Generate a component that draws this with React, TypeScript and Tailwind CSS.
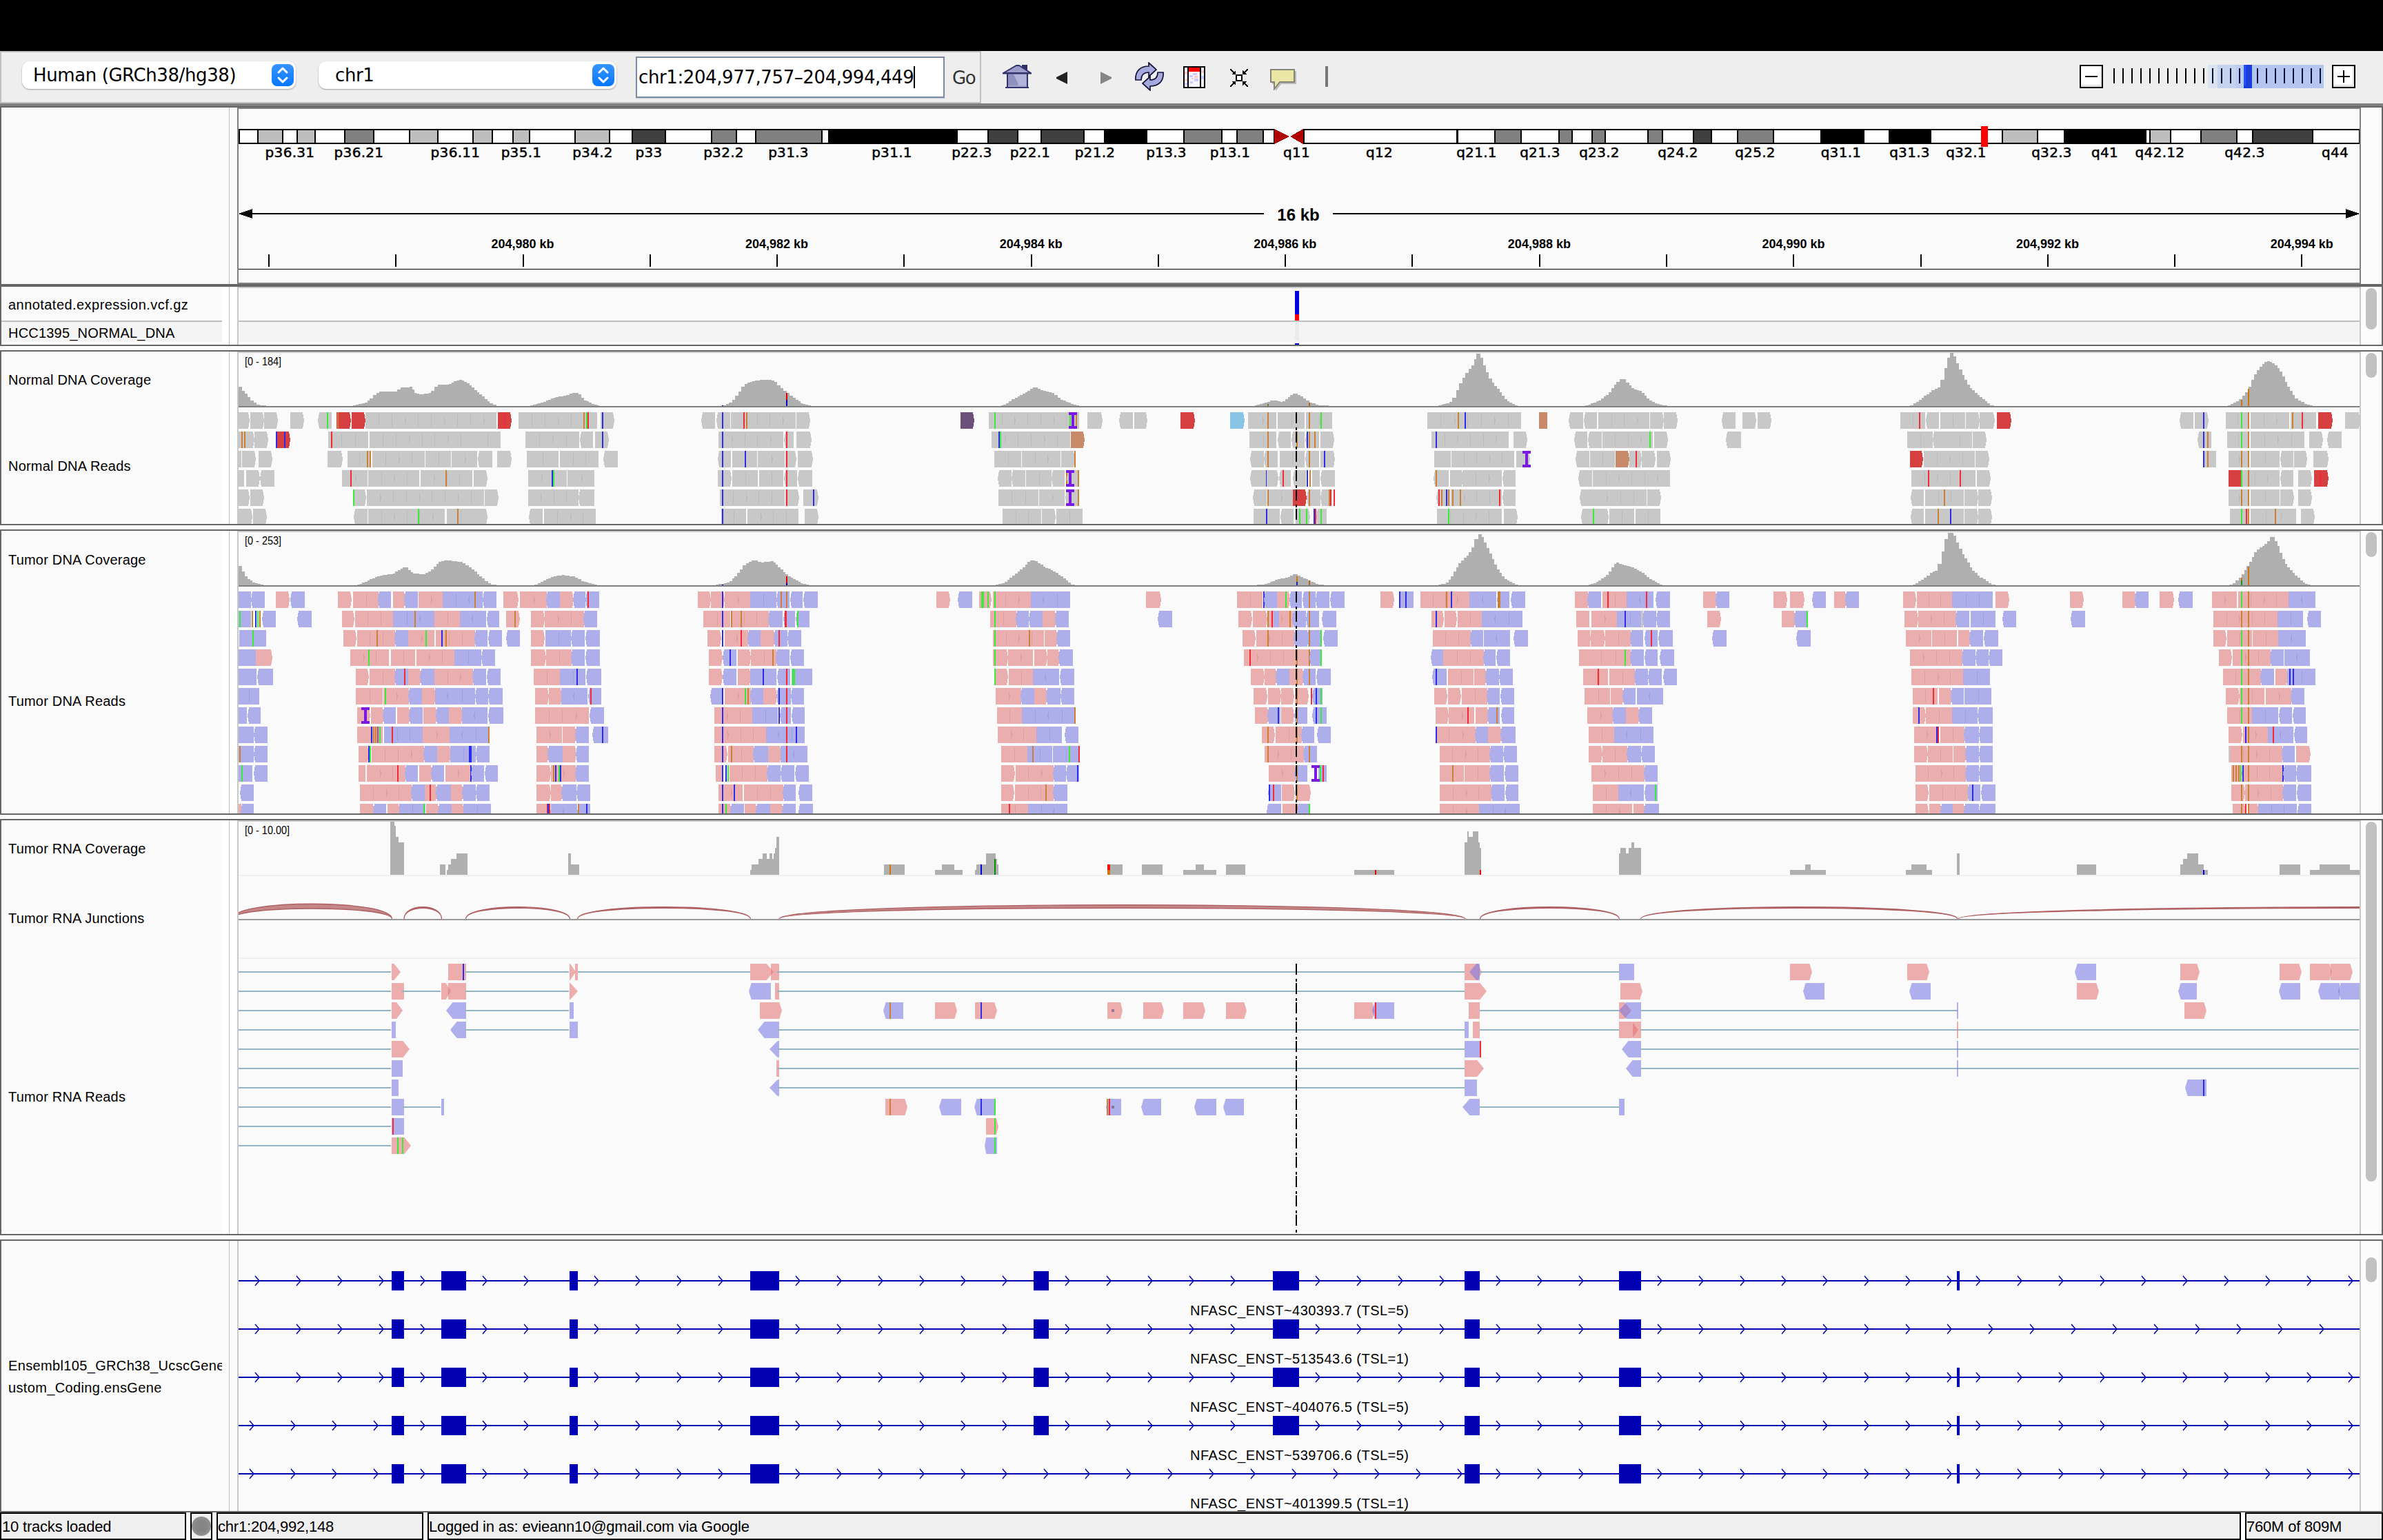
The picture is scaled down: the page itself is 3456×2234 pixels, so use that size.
import React from "react";

/* ------------------------------------------------------------------ */
/* Coordinates                                                          */
/* Track data is stored in three windows (A, B, C), each with its own   */
/* origin and bin density.                                              */
/* ------------------------------------------------------------------ */

type Win = "A" | "B" | "C";

const toX: Record<Win, (v: number) => number> = {
  A: (v) => v / 1.3517,
  B: (v) => 1150 + v / 1.3517,
  C: (v) => 2300 + v / 1.3564,
};

const WINDOWS: Win[] = ["A", "B", "C"];
const LEFT = 346;
const RIGHT = 3422;
const WIDTH = RIGHT - LEFT;

const FILL: Record<string, string> = {
  n: "#c8c8c8",
  p: "#ebaeae",
  b: "#aeaeeb",
  R: "#d64040",
  T: "#c98a6a",
  V: "#6b507c",
  L: "#87c4e5",
};

const SEAM: Record<string, string> = {
  n: "#bcbcbc",
  p: "#e39c9c",
  b: "#9e9ee2",
};

const MARK: Record<string, string> = {
  r: "#f52a35",
  g: "#3cea3c",
  u: "#2c2cec",
  o: "#cc8033",
  k: "#9a4f9a",
};

type Token = { kind: string; x0: number; x1: number | null; tip: number };

function parse(win: Win, text: string): Token[] {
  return text
    .split(" ")
    .filter(Boolean)
    .map((t) => {
      const m = /^([a-zA-Z])(-?[\d.]+)(?:-(\d+))?(?:>(\d+))?$/.exec(t);
      if (!m) return { kind: "?", x0: 0, x1: null, tip: 0 };
      return {
        kind: m[1],
        x0: toX[win](Number(m[2])),
        x1: m[3] ? toX[win](Number(m[3])) : null,
        tip: m[4] ? Number(m[4]) / 1.3517 : 0,
      };
    });
}

/* ------------------------------------------------------------------ */
/* DNA reads                                                            */
/* ------------------------------------------------------------------ */

type Row = [string, string, string];

const NORMAL_READS: Row[] = [
  [
    "n467-488 n491-516 n518-543 n569-595 n624-650 g642 R660-686 o663 R689-715 n716-973 R976-1002 r990 n1016-1170 o1145 g1150 r1153 n1177-1203 u1182 n1376-1402 n1406-1432 u1417 n1433-1560 r1458 o1464",
    "n7-32 V328-354 n384-561 g396 g544 o555 I549 n577-605 n641-667 n669-694 R760-787 L857-884 n892-948 o931 n950-1003 n1005-1057 o1012 g1036 n1244-1427 o1304 u1318 T1463-1479 n1522-1549",
    "n-3-22 n24-125 n126-152 n153-179 n269-295 n308-334 n338-364 n619-668 r657 n670-695 n697-746 n747-773 n775-803 R809-836 n1169-1195 n1198-1223 u1216 n1259-1305 g1290 o1303 n1307-1384 n1386-1437 o1390 r1409 R1441-1468 n1493-1522",
  ],
  [
    "n467-497 o474 o480 n499-524 R541-568 u542 u558 n643-722 r650 n724-928 n929-981 n1030-1136 n1138-1162 n1167-1192 u1182 n1408-1536 u1417 n1538-1556 r1542",
    "n7-35 n389-543 u404 g407 T545-570 n895-948 o931 n952-976 n978-1003 o988 n1005-1032 u1009 o1012 o1023 n1034-1060 n1252-1403 u1261 n1412-1438 n1533-1552",
    "n-4-3 n5-31 n33-132 g126 n134-160 n277-305 n632-682 n684-709 n710-760 n761-787 n1204-1230 u1216 o1224 n1261-1305 g1290 o1303 n1307-1413 n1423-1449 n1459-1486",
  ],
  [
    "n467-473 n474-500 n507-533 n642-670 n681-727 o720 o726 n730-832 n834-884 n886-935 n938-965 n974-1002 n1033-1095 n1097-1173 n1184-1211 n1408-1433 u1417 n1435-1484 u1461 n1486-1538 n1540-1560 r1542",
    "n9-38 n395-447 n449-524 n526-552 o553 n898-923 n925-950 o931 n954-1003 n1006-1032 o1012 n1034-1061 u1042 n1257-1289 n1291-1414 n1418-1444 I1438 n1536-1561",
    "n8-57 T58-84 n85-108 r99 n110-136 n140-165 R638-662 n664-765 n767-792 n1215-1240 u1216 o1224 n1264-1305 o1290 o1303 n1307-1365 n1367-1391 n1393-1418 n1431-1459",
  ],
  [
    "n467-479 n482-508 n511-538 n670-720 r688 n722-822 n825-926 o874 n928-954 n1035-1111 u1083 g1086 n1112-1165 n1407-1433 u1417 n1436-1486 n1488-1535 n1538-1563 r1542",
    "n11-38 n403-428 n430-455 n457-507 n508-533 o536 n538-560 I543 o559 n898-927 u928 n929-950 n954-976 r961 n981-1005 u1009 o1014 n1018-1033 n1036-1062 n1257-1286 o1261 n1288-1312 n1313-1390 n1392-1417 n1541-1567",
    "n13-165 n640-767 r674 r736 n769-795 R1264-1290 g1290 n1291-1365 o1303 n1367-1391 n1401-1427 R1433-1459 r1444",
  ],
  [
    "n467-488 n491-516 n693-717 g693 n719-949 n950-976 n1035-1134 n1135-1165 n1411-1538 u1417 n1540-1565 r1542",
    "n20-49 u40 n403-481 n483-533 n535-560 I543 o559 n903-929 o931 n933-980 R980-1006 n1008-1034 o1012 n1036-1054 o1051 r1055 r1061 n1263-1288 r1266 o1272 u1282 o1286 n1290-1390 o1293 o1309 r1385 n1392-1417 n1544-1570",
    "n15-119 n121-146 n640-665 n667-743 o706 n745-770 n772-798 n1264-1305 o1290 o1303 n1307-1365 n1366-1391 n1401-1427",
  ],
  [
    "n467-493 n496-522 n695-720 n722-872 g820 n876-928 o897 n929-954 n1038-1064 n1066-1168 n1414-1463 u1417 n1465-1565",
    "n23-49 n411-487 n488-514 n516-568 n903-954 u928 n957-982 n985-1012 g993 g1007 u1022 r1025 n1027-1046 g1036 n1263-1390 g1286 n1394-1419 n1546-1572",
    "n18-44 g15 n46-95 n97-146 n640-665 n667-743 o693 u717 n745-770 n772-798 n1267-1305 g1290 r1300 o1303 n1307-1397 o1357 n1406-1432",
  ],
];

const TUMOR_READS: Row[] = [
  [
    "b467-492 b494-519 p541-567 b571-597 p662-688 p692-742 b742-767 p770-794 b794-819 p820-868 b868-946 o931 b947-973 p987-1015 p1019-1072 b1072-1097 p1097-1123 b1124-1148 b1149-1175 r1153 p1368-1392 p1394-1419 u1417 p1420-1470 b1470-1522 b1524-1548 o1531 o1542 b1550-1573",
    "b21-49 p281-307 b325-351 p365-388 g370 g373 g382 p392-467 g396 b467-543 p692-721 p871-921 u923 b924-949 p949-973 g966 b974-998 b1000-1024 o1012 b1026-1052 b1054-1081 p1152-1178 b1190-1217 u1190 u1201 p1230-1326 o1282 u1291 b1326-1379 b1381-1405 o1383 o1385 b1408-1436 p1533-1560",
    "b4-30 p33-80 r44 b80-133 r120 b139-165 p231-256 b256-282 p369-395 p401-428 b446-472 p488-512 b512-537 p624-649 p651-720 b720-800 p806-832 p952-978 p1055-1081 b1081-1107 p1129-1155 b1167-1194 p1232-1281 p1283-1382 g1290 o1303 b1382-1435",
  ],
  [
    "b467-492 g471 o495 u501 g505 o509 b515-541 b584-611 p670-694 p696-770 b770-851 o814 p851-901 b901-953 b955-979 p992-1018 o1010 p1041-1066 p1068-1145 b1145-1171 p1379-1432 u1417 p1434-1507 o1434 o1453 b1507-1534 b1537-1558 r1539 r1541",
    "b7-32 g9 p387-438 g396 b438-462 b464-489 p489-515 b515-541 b717-743 p873-899 p901-928 o931 p933-980 r939 b942-953 o974 b980-1005 b1007-1032 o1012 b1038-1065 p1252-1275 u1261 p1277-1301 p1303-1350 b1350-1430 p1536-1560",
    "p-4-7 p11-61 b61-112 u77 n108-112 b113-138 b140-165 p239-265 p385-411 b411-437 g435 p627-652 p654-729 b729-754 b757-806 b820-846 b955-982 p1234-1360 o1290 o1303 b1360-1411 b1420-1446",
  ],
  [
    "b469-522 g496 p673-698 p700-775 o739 b775-800 p800-852 g836 p854-931 u866 o874 b931-956 b958-984 b993-1019 p1041-1067 b1069-1119 b1121-1146 b1149-1176 p1387-1413 u1417 p1420-1466 r1453 b1466-1491 p1491-1518 b1518-1543 r1528 b1545-1570",
    "p392-492 g396 o463 p494-518 b518-543 p881-906 p908-983 o931 b983-1008 b1009-1036 o1012 g1036 b1041-1068 p1254-1329 b1329-1353 b1355-1406 b1414-1441 p1538-1563",
    "p-2-8 p10-36 p38-88 b88-113 b116-141 r129 b144-171 b250-277 b415-442 p629-679 p681-730 p732-756 b756-781 b784-811 p1234-1259 p1261-1310 g1290 o1303 p1312-1362 b1362-1416",
  ],
  [
    "b467-502 p502-533 p687-763 g723 p766-814 p816-891 b891-943 b945-971 p1041-1069 p1071-1121 b1121-1146 b1149-1176 p1390-1415 b1418-1443 u1431 p1446-1470 p1472-1522 o1515 b1522-1548 b1550-1576",
    "p392-420 g396 p422-471 p473-497 p499-522 b522-549 p884-1012 r896 o988 o1013 b1014-1036 g1036 b1252-1275 p1275-1354 b1354-1378 b1380-1406 p1541-1568",
    "p0-88 g77 b88-114 b116-141 b147-174 p638-741 b741-766 b768-792 b794-819 p1245-1270 p1272-1347 g1290 o1303 b1347-1372 b1374-1424",
  ],
  [
    "b467-503 b506-535 p697-722 p724-775 b775-800 r793 p800-825 b825-851 p851-927 b927-953 b956-981 p1046-1097 b1097-1148 u1131 b1150-1179 p1390-1415 b1418-1444 p1446-1471 b1471-1522 u1496 b1525-1549 r1542 b1552-1566 g1555 g1557",
    "b11-38 p396-421 g396 p423-471 b471-522 b524-552 p898-923 o931 p925-947 b947-973 p973-1000 o988 b1000-1024 o1012 b1027-1054 b1255-1281 u1261 p1284-1334 p1336-1358 b1358-1384 b1386-1411 p1549-1570",
    "p0-44 r25 p46-96 b96-122 b124-149 b153-179 p640-742 b742-795 p1253-1328 g1290 o1303 b1328-1354 p1356-1380 b1380-1435 u1385 u1392",
  ],
  [
    "b467-508 p697-750 p752-802 g755 b802-827 p827-853 b853-931 b933-957 b959-985 p1049-1074 p1076-1100 b1100-1152 b1154-1179 r1158 b1393-1418 u1417 p1420-1472 g1461 o1466 b1472-1497 p1497-1522 b1524-1550 u1528 r1542 b1552-1576",
    "p397-447 b447-473 p473-498 b498-524 b526-552 p903-929 p931-955 p957-982 p984-1010 o988 r1017 b1019-1038 u1026 g1036 p1257-1282 p1284-1309 p1311-1361 b1361-1386 b1388-1414 p1552-1570",
    "p0-47 p49-73 b73-98 b100-152 p643-692 r684 p694-719 b719-743 b745-798 p1259-1284 p1286-1335 g1290 o1303 p1337-1388 b1388-1413",
  ],
  [
    "b467-484 b486-511 p700-725 I716 p727-751 b751-776 p779-803 b803-828 p830-855 b855-880 p880-906 b906-956 b958-987 p1049-1154 b1157-1184 p1400-1475 u1417 b1475-1525 u1528 b1530-1551 r1542 b1553-1578",
    "p400-449 b449-553 o553 p906-931 b931-956 u952 p957-982 b984-1008 o988 b1019-1046 u1026 g1036 p1260-1284 p1286-1336 r1323 p1338-1362 b1362-1386 o1380 b1389-1414 p1557-1570",
    "p3-53 b53-79 p79-104 b104-130 p643-667 u655 p669-720 b720-770 b772-800 p1261-1310 g1290 o1303 b1310-1362 b1365-1389 b1391-1416",
  ],
  [
    "b467-497 b499-524 p700-750 u728 o733 o737 k741 g745 b753-829 r769 p829-881 b881-959 o958 p1052-1101 p1103-1129 b1129-1154 b1163-1192 u1182 p1400-1502 u1417 b1502-1578 r1542 u1561",
    "p402-477 b477-527 b534-560 p919-944 o931 p946-997 b997-1022 o988 b1028-1054 p1260-1338 u1261 b1338-1363 p1363-1388 b1388-1417 p1560-1570",
    "p5-56 b56-133 p646-695 u690 r693 p697-745 b745-773 b775-800 p1264-1290 p1292-1342 u1298 o1303 b1342-1392 r1352 b1394-1419",
  ],
  [
    "b467-497 o471 b499-524 p703-722 u723 g726 p729-831 b831-857 p857-882 b882-932 u921 u923 b934-960 p1052-1075 b1075-1103 p1103-1128 b1130-1154 p1400-1425 u1417 p1427-1478 o1434 b1478-1506 p1506-1530 b1530-1583 r1542",
    "p408-459 b459-508 o471 b510-560 g542 r561 p925-1001 o931 b1001-1027 o1012 p1268-1367 b1367-1392 b1394-1419 p1560-1570",
    "p5-31 p33-82 b82-108 b110-136 p646-671 p673-721 p723-748 b748-773 b775-800 n1264-1267 p1267-1370 o1290 o1303 b1370-1394 p1397-1424",
  ],
  [
    "b467-495 g474 b499-524 p703-717 p719-795 r780 b795-819 p822-846 b846-871 p873-922 u923 b925-949 b951-976 p1052-1078 p1080-1128 o1086 u1089 g1096 u1099 b1128-1154 p1403-1418 u1417 u1424 g1427 p1430-1504 b1504-1530 b1532-1557 b1560-1586",
    "p408-434 p436-511 b511-535 b537-561 u558 p933-984 b984-1008 o988 b1030-1046 I1025 g1034 r1039 p1268-1315 o1293 p1317-1367 b1367-1394 b1396-1422 p1565-1572",
    "p11-115 b115-141 p648-748 b748-773 b775-800 p1270-1290 o1273 o1279 o1285 g1289 u1292 p1294-1370 o1303 u1371 b1372-1397 b1399-1427",
  ],
  [
    "b472-497 p706-807 b807-832 p832-856 r844 b856-884 p884-907 b907-932 b934-960 p1052-1078 p1080-1102 b1102-1130 b1131-1157 p1408-1456 u1417 u1439 p1458-1535 b1535-1560 b1566-1592",
    "p408-433 p435-511 o496 b511-538 b932-957 u934 r942 p958-983 p985-1014 o988 p1268-1369 b1369-1395 b1397-1422",
    "p14-64 b64-114 b116-141 g137 p648-673 p675-751 b751-776 u761 b778-806 p1270-1295 o1290 p1297-1371 o1303 b1371-1397 b1400-1427",
  ],
  [
    "p467-473 b473-497 p706-732 b732-757 p760-783 b783-834 g831 p835-860 b860-886 p886-909 b909-962 p1052-1078 r1073 u1075 r1077 b1080-1131 b1133-1157 o1134 u1150 p1408-1433 g1424 u1417 b1433-1458 p1460-1483 b1483-1510 p1510-1534 b1534-1560 b1566-1594",
    "p408-461 r425 b461-538 b930-957 p960-988 o988 b990-1012 g1012 p1268-1345 b1345-1425",
    "p14-91 p93-115 b115-144 p648-673 p675-698 b698-722 p722-745 b745-773 b775-806 p1272-1297 o1290 r1298 o1303 p1305-1322 b1322-1399 b1401-1427",
  ],
];

function DnaRow({ row, y }: { row: Row; y: number }) {
  return (
    <g>
      {WINDOWS.map((w, wi) =>
        parse(w, row[wi]).map((t, i) => {
          const key = w + i;
          if (t.kind === "I") {
            return (
              <g key={key} fill="#7a1ae0">
                <rect x={t.x0 - 6} y={y} width={12} height={4} />
                <rect x={t.x0 - 2} y={y} width={4} height={24} />
                <rect x={t.x0 - 6} y={y + 20} width={12} height={4} />
              </g>
            );
          }
          if (t.x1 === null) {
            return <rect key={key} x={Math.round(t.x0 - 1)} y={y} width={2} height={24} fill={MARK[t.kind]} />;
          }
          const x0 = Math.round(t.x0);
          const x1 = Math.round(t.x1);
          const w0 = x1 - x0;
          const n = Math.round(w0 / 19);
          const seam = SEAM[t.kind];
          const back = t.kind === "b";
          return (
            <g key={key}>
              {w0 > 12 && w0 < 24 ? (
                back || (t.kind === "n" && x0 % 2 === 0) ? (
                  <path d={`M${x0 + 1} ${y}H${x1}V${y + 24}H${x0 + 1}L${x0 - 1} ${y + 12}Z`} fill={FILL[t.kind]} />
                ) : (
                  <path d={`M${x0} ${y}H${x1 - 1}L${x1 + 1} ${y + 12}L${x1 - 1} ${y + 24}H${x0}Z`} fill={FILL[t.kind]} />
                )
              ) : (
                <rect x={x0} y={y} width={w0} height={24} fill={FILL[t.kind]} />
              )}
              {seam &&
                n > 1 &&
                Array.from({ length: n - 1 }, (_, k) => {
                  const sx = Math.round(x0 + ((k + 1) * w0) / n);
                  return (x0 + k) % 3 === 1 ? (
                    <path
                      key={k}
                      d={`M${sx} ${y + 3}L${sx + (back ? -2 : 2)} ${y + 12}L${sx} ${y + 21}Z`}
                      fill={seam}
                    />
                  ) : (
                    <rect key={k} x={sx} y={y + 3} width={1} height={18} fill={seam} />
                  );
                })}
            </g>
          );
        }),
      )}
    </g>
  );
}

function CenterLine({ y0, y1 }: { y0: number; y1: number }) {
  return <line x1={1880} x2={1880} y1={y0} y2={y1} stroke="#000" strokeWidth={2} strokeDasharray="16 6 4 2" />;
}

/* ------------------------------------------------------------------ */
/* Coverage                                                             */
/* ------------------------------------------------------------------ */

const NORMAL_COVERAGE: Record<Win, string[]> = {
  A: [
    "467,60 475,48 485,30 497,12 510,2 533,0",
    "692,0 715,8 725,18 738,36 750,42 778,42 785,52 808,55 812,38 826,33 845,38 858,60 880,60 890,70 905,75 920,62 945,30 960,10 973,1",
    "1035,0 1060,8 1090,25 1110,30 1122,38 1134,38 1145,18 1165,5 1180,0",
    "1417,0 1435,12 1447,35 1460,62 1475,70 1500,76 1518,72 1530,55 1542,40 1560,20 1574,6 1594,0",
  ],
  B: [
    "403,0 417,5 435,22 455,37 475,55 490,44 512,36 525,20 540,10 555,3 568,0",
    "900,0 925,8 940,17 960,12 975,28 985,38 1000,25 1012,12 1030,3 1060,0",
    "1260,0 1275,5 1292,12 1300,35 1312,75 1325,100 1335,120 1340,148 1348,148 1358,105 1370,70 1385,45 1400,15 1420,1",
  ],
  C: [
    "-8,0 5,3 30,18 45,35 60,65 72,80 85,62 95,48 110,42 120,25 135,8 150,2 165,0",
    "638,0 655,15 680,42 697,55 705,95 716,150 723,150 740,95 755,55 775,28 795,4 803,0",
    "1263,0 1285,15 1303,45 1315,85 1330,118 1340,127 1350,125 1365,105 1380,62 1395,25 1413,8 1430,0",
  ],
};

const TUMOR_COVERAGE: Record<Win, string[]> = {
  A: [
    "467,65 475,45 485,20 500,6 522,0",
    "700,0 720,12 745,28 770,32 795,53 810,35 828,30 845,40 860,65 875,72 907,66 925,48 945,22 962,3 978,0",
    "1048,0 1065,12 1085,25 1107,29 1127,24 1145,10 1175,0",
    "1397,0 1430,8 1445,30 1462,62 1480,72 1492,65 1516,68 1530,48 1545,28 1560,16 1574,4 1585,0",
  ],
  B: [
    "397,0 415,8 435,30 455,55 465,70 475,72 490,55 515,38 530,22 545,4 553,0",
    "905,0 930,4 950,17 970,22 985,33 1000,22 1015,12 1030,3 1046,0",
    "1260,0 1280,5 1290,20 1300,45 1310,68 1325,88 1335,115 1343,146 1350,146 1365,98 1380,50 1395,20 1415,4 1422,0",
  ],
  C: [
    "0,0 15,4 40,25 60,65 80,55 95,50 110,38 130,15 150,0",
    "643,0 665,18 682,38 692,42 700,80 712,148 723,150 740,95 760,45 775,25 798,4 806,0",
    "1260,0 1272,3 1290,25 1305,60 1320,100 1340,120 1350,142 1360,120 1375,65 1395,30 1415,5 1430,0",
  ],
};

function steps(win: Win, text: string, base: number) {
  const pts = text.split(" ").map((p) => {
    const [x, h] = p.split(",").map(Number);
    return [toX[win](x), h / 1.96] as const;
  });
  let d = `M${Math.round(pts[0][0])} ${base}`;
  for (let i = 0; i < pts.length - 1; i++) {
    const [xa, ha] = pts[i];
    const [xb, hb] = pts[i + 1];
    const n = Math.max(1, Math.round((xb - xa) / 4));
    for (let k = 0; k < n; k++) {
      const h = ha + ((hb - ha) * (k + 0.5)) / n;
      d += `V${Math.round(base - h)}H${Math.round(xa + ((xb - xa) * (k + 1)) / n)}`;
    }
  }
  return d + `V${base}Z`;
}

type Allele = [Win, number, number, number, string];

function DnaCoverage({ data, base, alleles }: { data: Record<Win, string[]>; base: number; alleles: Allele[] }) {
  return (
    <g>
      {WINDOWS.map((w) => data[w].map((s, i) => <path key={w + i} d={steps(w, s, base)} fill="#afafaf" />))}
      {alleles.map(([w, x, h0, h1, c], i) => (
        <rect key={i} x={Math.round(toX[w](x) - 1)} y={base - h1} width={2} height={h1 - h0} fill={c} />
      ))}
      <rect x={LEFT} y={base} width={WIDTH} height={2} fill="#808080" />
    </g>
  );
}

const NORMAL_ALLELES: Allele[] = [
  ["A", 1417, 0, 1, "#0000c0"],
  ["A", 1542, 0, 9, "#0000c0"],
  ["A", 1542, 9, 19, "#e00000"],
  ["B", 931, 0, 3, "#7a7a20"],
  ["B", 1012, 0, 5, "#b06a20"],
  ["C", 1290, 0, 9, "#c87414"],
  ["C", 1303, 0, 25, "#d0740a"],
];

const TUMOR_ALLELES: Allele[] = [
  ["A", 1417, 0, 1, "#0000c0"],
  ["A", 1542, 0, 3, "#0000c0"],
  ["A", 1542, 3, 13, "#e00000"],
  ["B", 988, 0, 5, "#2020c0"],
  ["B", 988, 5, 13, "#d0740a"],
  ["B", 1012, 0, 7, "#b06a20"],
  ["C", 1290, 0, 7, "#209020"],
  ["C", 1290, 7, 11, "#d0740a"],
  ["C", 1303, 0, 27, "#d0740a"],
];

/* x0, x1, height */
const RNA_COVERAGE: Record<Win, [number, number, number][]> = {
  A: [
    [765, 773, 195], [773, 776, 179], [776, 781, 139], [781, 792, 119],
    [862, 873, 38], [876, 879, 18], [879, 884, 38], [884, 895, 58], [895, 916, 78],
    [1114, 1119, 78], [1119, 1135, 38],
    [1471, 1473, 18], [1473, 1487, 38], [1487, 1495, 58], [1495, 1503, 78], [1503, 1509, 58],
    [1509, 1514, 78], [1514, 1517, 58], [1517, 1519, 78], [1519, 1522, 98], [1522, 1527, 139],
  ],
  B: [
    [178, 219, 38], [278, 333, 18], [292, 316, 38], [357, 360, 18], [360, 378, 38], [378, 397, 78],
    [397, 400, 58], [400, 403, 38], [616, 646, 38], [684, 725, 38], [765, 830, 18], [789, 806, 38],
    [849, 887, 38], [1100, 1179, 18], [1317, 1322, 119], [1322, 1325, 159], [1325, 1333, 139],
    [1333, 1344, 159], [1344, 1346, 119], [1346, 1349, 99],
  ],
  C: [
    [65, 68, 78], [68, 79, 99], [79, 84, 78], [84, 109, 99], [90, 95, 119], [401, 472, 18], [431, 442, 38],
    [629, 681, 18], [640, 670, 38], [730, 735, 78], [966, 1004, 38], [1169, 1175, 38], [1175, 1183, 58],
    [1183, 1204, 78], [1204, 1215, 38], [1215, 1223, 18], [1365, 1405, 38], [1424, 1522, 18], [1443, 1503, 38],
  ],
};

const RNA_ALLELES: Allele[] = [
  ["B", 190, 0, 15, "#d0740a"],
  ["B", 369, 0, 15, "#0000e0"],
  ["B", 396, 0, 23, "#009000"],
  ["B", 617.5, 0, 7, "#d0740a"],
  ["B", 620.5, 0, 7, "#d0740a"],
  ["B", 617.5, 7, 15, "#ff0000"],
  ["B", 620.5, 7, 15, "#ff0000"],
  ["B", 1142, 0, 7, "#e00000"],
  ["B", 1347.5, 0, 7, "#ff0000"],
  ["C", 1216, 0, 7, "#0000e0"],
];

function RnaCoverage() {
  return (
    <g>
      {WINDOWS.map((w) =>
        RNA_COVERAGE[w].map(([a, b, h], i) => {
          const x0 = Math.round(toX[w](a));
          const x1 = Math.round(toX[w](b));
          const hh = Math.round(h / 2.529);
          return <rect key={w + i} x={x0} y={1269 - hh} width={x1 - x0} height={hh} fill="#afafaf" />;
        }),
      )}
      {RNA_ALLELES.map(([w, x, h0, h1, c], i) => (
        <rect key={i} x={Math.round(toX[w](x) - 1)} y={1269 - h1} width={2} height={h1 - h0} fill={c} />
      ))}
    </g>
  );
}

/* x0, x1, outer control height, inner control height */
const JUNCTIONS: [number, number, number, number][] = [
  [337, 568.5, 29, 20],
  [586, 640.5, 23, 21],
  [675.5, 826.5, 23, 21],
  [837.5, 1088.5, 23, 21],
  [1130, 2125, 27, 21],
  [2146.5, 2348.5, 23, 21],
  [2379.5, 2839, 23, 21],
  [2840, 4060, 23, 21],
];

function Junctions() {
  return (
    <g>
      <rect x={LEFT} y={1333} width={WIDTH} height={2} fill="#999999" />
      {JUNCTIONS.map(([a, b, o, i], k) => (
        <path
          key={k}
          d={`M${a} 1333C${a} ${1333 - o} ${b} ${1333 - o} ${b} 1333C${b} ${1333 - i} ${a} ${1333 - i} ${a} 1333Z`}
          fill="#c48686"
          stroke="#b05f62"
          strokeWidth={1.3}
        />
      ))}
    </g>
  );
}

/* ------------------------------------------------------------------ */
/* RNA reads; "l" is a splice connector, ">" gives the arrow tip size   */
/* ------------------------------------------------------------------ */

const RNA_READS: Row[] = [
  [
    "l467-767 p768-786>13 p879-914 u909 l913-1115 p1117-1128>11 p1127-1133 l1133-1471 p1471-1517>14 p1511-1527 l1523-2871",
    "p1317-1350>7 b1326-1346>14 l1346-1620",
    "b65-95 p401-445>5 p632-675>5 b962-1004>5 p1169-1207>5 p1365-1408>5 p1424-1468>5 p1465-1508>5",
  ],
  [
    "l467-767 p768-792 l788-864 p865-884>10 p879-914 l913-1115 p1117-1133>15 b1468-1511>5 p1519-1527 l1523-2871",
    "p1317-1360>13",
    "p68-111>5 b427-469>5 b636-678>5 p966-1009>5 b1165-1202>5 b1363-1405>5 b1441-1482>5 b1480-1522>5",
  ],
  [
    "l467-767 p768-789>12 b874-914>13 l913-1115 b1117-1125 p1490-1533>5",
    "b177-216>5 o190 p278-322>5 p357-400>5 u369 p616-646>4 d624-630 p687-727>5 p765-808>5 p849-889>5 p1100-1141>5 b1136-1179>5 r1142 p1325-1346 l1346-1620",
    "p65-90>13 b65-109>14 l107-731 b730-732 p1177-1221>5",
  ],
  [
    "l467-767 b768-776 b882-914>13 l913-1115 b1117-1133 b1485-1527>13 l1523-2871",
    "b1317-1325 p1333-1346 l1346-1620",
    "p65-103>12 p92-109 l107-1521 p730-732",
  ],
  ["l467-767 p768-803>13 b1509-1527>16 l1523-2871", "b1317-1346 r1347.5", "b71-109>13 l107-1521 b730-732"],
  ["l467-767 b768-789 p1522-1527 l1523-2871", "p1317-1354>13", "b79-109>13 l107-1521 b730-732"],
  ["l467-767 b768-781 b1509-1527>16 l1523-2871", "b1317-1341", "b1179-1221>5 u1216"],
  [
    "l467-767 b768-792 l788-864 b865-871",
    "p181-224>5 o190 b287-330>5 b355-397>5 u369 g396 b614-643>4 o617 r620.5 d624-630 b682-722>5 b787-830>5 b844-884>5 b1312-1346>14 l1346-1620",
    "b65-76",
  ],
  ["l467-767 b768-792 r771", "p378-403>4 g396", ""],
  ["l467-767 p768-806>13 g780 g790", "b376-400>3 g396", ""],
];

function RnaRow({ row, y }: { row: Row; y: number }) {
  return (
    <g>
      {WINDOWS.map((w, wi) =>
        parse(w, row[wi]).map((t, i) => {
          const key = w + i;
          const x0 = Math.round(t.x0);
          if (t.x1 === null) return <rect key={key} x={Math.round(t.x0 - 1)} y={y} width={2} height={24} fill={MARK[t.kind]} />;
          const x1 = Math.round(t.x1);
          if (t.kind === "l") return <rect key={key} x={x0} y={y + 11} width={x1 - x0} height={2} fill="#92b5c6" />;
          if (t.kind === "d") return <rect key={key} x={x0} y={y + 10} width={4} height={4} fill="#7c5f86" fillOpacity={0.75} />;
          const d = !t.tip
            ? `M${x0} ${y}H${x1}V${y + 24}H${x0}Z`
            : t.kind === "p"
              ? `M${x0} ${y}H${x1 - t.tip}L${x1} ${y + 12}L${x1 - t.tip} ${y + 24}H${x0}Z`
              : `M${x1} ${y}H${x0 + t.tip}L${x0} ${y + 12}L${x0 + t.tip} ${y + 24}H${x1}Z`;
          return <path key={key} d={d} fill={t.kind === "p" ? "#e57373" : "#7676e2"} fillOpacity={0.57} />;
        }),
      )}
    </g>
  );
}

/* ------------------------------------------------------------------ */
/* Ideogram and ruler                                                   */
/* ------------------------------------------------------------------ */

const G1 = "#bebebe";
const G2 = "#808080";
const G3 = "#404040";
const BK = "#000000";

const BANDS: [Win, number, number, string][] = [
  ["A", 505, 554, G1], ["A", 583, 618, G1], ["A", 676, 732, G2], ["A", 803, 859, G1], ["A", 927, 965, G1],
  ["A", 1005, 1038, G1], ["A", 1127, 1195, G1], ["A", 1240, 1305, G3], ["A", 1395, 1443, G2], ["A", 1481, 1611, G2],
  ["B", 70, 322, BK], ["B", 382, 440, G3], ["B", 486, 571, G3], ["B", 611, 694, BK], ["B", 767, 841, G2],
  ["B", 870, 922, G2], ["B", 1302, 1303, BK], ["B", 1376, 1427, G2], ["B", 1502, 1528, G2],
  ["C", 12, 38, G2], ["C", 122, 150, G2], ["C", 211, 247, G3], ["C", 298, 369, G2], ["C", 462, 546, BK],
  ["C", 597, 678, BK], ["C", 819, 889, G1], ["C", 942, 1102, BK], ["C", 1109, 1150, G1], ["C", 1210, 1281, G2],
  ["C", 1311, 1430, G3],
];

const BAND_LABELS: [string, number][] = [
  ["p36.31", 420.5], ["p36.21", 520.5], ["p36.11", 660.5], ["p35.1", 756], ["p34.2", 859.5], ["p33", 941],
  ["p32.2", 1049.5], ["p31.3", 1143.5], ["p31.1", 1293.5], ["p22.3", 1409.5], ["p22.1", 1494], ["p21.2", 1588],
  ["p13.3", 1691.5], ["p13.1", 1784], ["q11", 1880.5], ["q12", 2000.5], ["q21.1", 2141.5], ["q21.3", 2233.5],
  ["q23.2", 2319.5], ["q24.2", 2433.5], ["q25.2", 2545.5], ["q31.1", 2670], ["q31.3", 2769.5], ["q32.1", 2851.5],
  ["q32.3", 2975.5], ["q41", 3052.5], ["q42.12", 3132.5], ["q42.3", 3255.5], ["q44", 3386.5],
];

function Ideogram() {
  return (
    <svg viewBox="346 158 3076 252" className="block h-[252px] w-[3076px]" shapeRendering="crispEdges">
      <rect x={347} y={188} width={1501} height={20} fill="#fff" stroke="#000" strokeWidth={2} />
      <rect x={1891} y={188} width={1531} height={20} fill="#fff" stroke="#000" strokeWidth={2} />
      {BANDS.map(([w, a, b, c], i) => {
        const x0 = Math.round(toX[w](a));
        const x1 = Math.round(toX[w](b));
        return <rect key={i} x={x0} y={188} width={x1 - x0} height={20} fill={c} stroke="#000" strokeWidth={2} />;
      })}
      <path d="M1848 187L1870 198L1848 209Z" fill="#b00000" />
      <path d="M1890 187L1871 198L1890 209Z" fill="#b00000" />
      <rect x={2873} y={183} width={10} height={30} fill="#ff0000" />
      <g
        fontFamily="'DejaVu Sans', sans-serif"
        fontSize={20}
        letterSpacing={0.3}
        textAnchor="middle"
        stroke="#000"
        strokeWidth={0.5}
      >
        {BAND_LABELS.map(([t, x]) => (
          <text key={t} x={x} y={228}>
            {t}
          </text>
        ))}
      </g>
      <rect x={350} y={309} width={1483} height={2} />
      <rect x={1933} y={309} width={1485} height={2} />
      <path d="M346 310L366 303V317Z" />
      <path d="M3422 310L3402 303V317Z" />
      <g fontFamily="'Liberation Sans', Arial, sans-serif" fontWeight={700} textAnchor="middle">
        <text x={1883} y={320} fontSize={24}>
          16 kb
        </text>
        {Array.from({ length: 8 }, (_, i) => (
          <text key={i} x={758 + i * 368.6} y={360} fontSize={18}>
            {`204,${980 + i * 2} kb`}
          </text>
        ))}
      </g>
      {Array.from({ length: 17 }, (_, i) => (
        <rect key={i} x={Math.round(389 + i * 184.27)} y={369} width={2} height={18} />
      ))}
      <rect x={346} y={390} width={3076} height={1} />
    </svg>
  );
}

/* ------------------------------------------------------------------ */
/* Genes                                                                */
/* ------------------------------------------------------------------ */

const HEAD_EXONS = [[568, 586], [640, 676], [826, 838], [1088, 1130]];
const MID_EXONS = [[1499, 1521], [1846, 1884]];
const TAIL_EXONS = [[2124, 2146], [2348, 2380]];
const LAST_EXON = [[2838, 2842]];

const GENES = [
  { label: "NFASC_ENST~430393.7 (TSL=5)", start: 346, exons: [...HEAD_EXONS, ...MID_EXONS, ...TAIL_EXONS, ...LAST_EXON] },
  { label: "NFASC_ENST~513543.6 (TSL=1)", start: 346, exons: [...HEAD_EXONS, ...MID_EXONS, ...TAIL_EXONS] },
  { label: "NFASC_ENST~404076.5 (TSL=5)", start: 346, exons: [...HEAD_EXONS, ...MID_EXONS, ...TAIL_EXONS, ...LAST_EXON] },
  { label: "NFASC_ENST~539706.6 (TSL=5)", start: 338, exons: [...HEAD_EXONS, ...MID_EXONS, ...TAIL_EXONS, ...LAST_EXON] },
  { label: "NFASC_ENST~401399.5 (TSL=1)", start: 338, exons: [...HEAD_EXONS, ...TAIL_EXONS, ...LAST_EXON] },
];

function Genes() {
  return (
    <svg viewBox="346 1800 3076 392" className="block h-[392px] w-[3076px]">
      {GENES.map((g, i) => {
        const y = 1858 + i * 70;
        const tips: number[] = [];
        let from = g.start;
        [...g.exons, [3432, 3432]].forEach(([a, b]) => {
          for (let x = from + 30; x < a; x += 60) tips.push(x);
          from = b;
        });
        return (
          <g key={g.label}>
            <rect x={346} y={y - 1} width={3076} height={2} fill="#0000b2" />
            {tips.map((x) => (
              <path key={x} d={`M${x - 6} ${y - 7}L${x} ${y}L${x - 6} ${y + 7}`} fill="none" stroke="#0000b2" strokeWidth={1.5} />
            ))}
            {g.exons.map(([a, b]) => (
              <rect key={a} x={a} y={y - 14} width={b - a} height={28} fill="#0000b2" />
            ))}
            <text x={1726} y={y + 50} fontFamily="'Liberation Sans', Arial, sans-serif" fontSize={20} textLength={317}>
              {g.label}
            </text>
          </g>
        );
      })}
    </svg>
  );
}

/* ------------------------------------------------------------------ */
/* Panels                                                               */
/* ------------------------------------------------------------------ */

function Panel({
  height,
  names,
  dark = false,
  flat = false,
  gap = false,
  thumb,
  children,
}: {
  height: string;
  names?: React.ReactNode;
  dark?: boolean;
  flat?: boolean;
  gap?: boolean;
  thumb?: string;
  children: React.ReactNode;
}) {
  return (
    <div className={gap ? "bg-[#fdfdfd] pb-[6px]" : ""}>
      <div className="border-2 border-[#666666]">
        <div className={`flex ${height} overflow-hidden bg-[#fafafa]`}>
          <div className="flex w-[320px] shrink-0 flex-col overflow-hidden text-[20px] leading-[32px]">{names}</div>
          <div className={`w-[11px] shrink-0 border-r border-[#c0c0c0] ${flat ? "" : "bg-white"}`} />
          <div className={`w-[11px] shrink-0 ${flat ? "" : "bg-white"}`} />
          <div
            className={`w-[3080px] shrink-0 overflow-hidden border-x-2 ${
              dark ? "border-y-2 border-[#808080]" : flat ? "border-[#c8c8c8]" : "border-t-2 border-[#c8c8c8]"
            }`}
          >
            {children}
          </div>
          <div className="flex flex-1 justify-center bg-[#fcfcfc]">
            {thumb && <div className={`w-4 rounded-full bg-[#c1c1c1] ${thumb}`} />}
          </div>
        </div>
      </div>
    </div>
  );
}

function Name({ className, children }: { className: string; children: React.ReactNode }) {
  return <div className={`flex shrink-0 items-center pl-[10px] whitespace-nowrap ${className}`}>{children}</div>;
}

function RangeLabel({ y, length, children }: { y: number; length: number; children: string }) {
  return (
    <text x={355} y={y} fontFamily="'Liberation Sans', Arial, sans-serif" fontSize={16} textLength={length} lengthAdjust="spacingAndGlyphs">
      {children}
    </text>
  );
}

/* ------------------------------------------------------------------ */
/* Toolbar                                                              */
/* ------------------------------------------------------------------ */

function Combo({ className, children }: { className: string; children: React.ReactNode }) {
  return (
    <div
      className={`mt-[13px] flex h-10 items-center justify-between rounded-[11px] bg-white pr-[3px] shadow-[0_1px_2px_rgba(0,0,0,0.35)] ${className}`}
    >
      <span className="whitespace-nowrap">{children}</span>
      <span className="flex h-8 w-8 items-center justify-center rounded-lg bg-linear-to-b from-[#3594ff] to-[#0077ff]">
        <svg viewBox="0 0 32 32" className="h-8 w-8" fill="none" stroke="#fff" strokeWidth={3} strokeLinecap="round" strokeLinejoin="round">
          <path d="M10 12L16 6L22 12M10 20L16 26L22 20" />
        </svg>
      </span>
    </div>
  );
}

function ToolbarIcons() {
  return (
    <>
      <svg viewBox="0 0 42 34" className="mt-5 ml-[31px] h-[34px] w-[42px]">
        <path d="M6 13H36V32H6Z" fill="#a3a3cf" />
        <path d="M8 14H22V30H8Z" fill="#8f8fc0" />
        <path d="M16 14H34V30H24Z" fill="#b4b4da" />
        <path d="M28 0H36V9L28 6Z" fill="#2f2f66" />
        <path d="M1 12L20 1H24L41 12Z" fill="#9c9cc8" stroke="#33336b" strokeWidth={2} />
        <path d="M0 12.5H42M7 13V33M36 13V33M4 33H38" stroke="#33336b" strokeWidth={2} fill="none" />
      </svg>
      <svg viewBox="0 0 16 18" className="mt-[30px] ml-9 h-[18px] w-4">
        <path d="M16 0V18L0 10V8Z" fill="#222" />
      </svg>
      <svg viewBox="0 0 16 18" className="mt-[30px] ml-12 h-[18px] w-4">
        <path d="M0 0V18L16 10V8Z" fill="#858585" />
      </svg>
      <svg viewBox="0 0 42 42" className="mt-4 ml-[34px] h-[42px] w-[42px]" fill="#a6a9dc" stroke="#14143c" strokeWidth={1.7}>
        <path d="M1 26C0 13 8 6 20 6V1L31 11L20 21V15C13 15 9 18 9 26Z" />
        <path d="M41 15C42 28 34 35 22 35V41L11 31L22 21V26C29 26 33 23 33 15Z" />
      </svg>
      <svg viewBox="0 0 32 32" className="mt-[22px] ml-7 h-8 w-8">
        <rect x={1} y={1} width={30} height={30} fill="#f7f5ff" stroke="#000" strokeWidth={2} />
        <path d="M9 13h5v3h-5zM14 10h6v3h-6zM16 18h6v4h-6zM10 22h4v3h-4z" fill="#c9ccff" />
        <path d="M2 8h4v4H2zM16 14h5v3h-5zM3 18h3v4H3zM27 6h3v4h-3zM12 17h3v2h-3z" fill="#ffc6c6" />
        <path d="M26 14h4v5h-4zM3 24h3v4H3z" fill="#c9ccff" />
        <rect x={8} y={2} width={16} height={6} fill="#ff0000" />
        <path d="M7 1V31M25 1V31" stroke="#000" strokeWidth={2} />
      </svg>
      <svg viewBox="0 0 26 26" className="mt-[26px] ml-9 h-[26px] w-[26px]" shapeRendering="crispEdges">
        <rect x={9} y={9} width={8} height={8} fill="#fff" stroke="#000" strokeWidth={2} />
        <path d="M0 0L7 7M26 0L19 7M0 26L7 19M26 26L19 19" stroke="#000" strokeWidth={1.8} />
        <path d="M8 2V8H2ZM18 2V8H24ZM8 24V18H2ZM18 24V18H24Z" fill="#000" />
      </svg>
      <svg viewBox="0 0 38 32" className="mt-[26px] ml-8 h-8 w-[38px]">
        <path d="M3 3H38V22H16L8 32L7 22H3Z" fill="#b9b9b9" />
        <path d="M1 1H35V19H14L6 29V19H1Z" fill="#eae6a6" stroke="#858575" strokeWidth={2} />
      </svg>
      <div className="mt-[22px] ml-[42px] h-[30px] w-1 bg-[#777777]" />
    </>
  );
}

function ZoomSlider() {
  return (
    <div className="mt-5 mr-10 ml-auto flex h-[34px]">
      <div className="flex w-[34px] items-center justify-center border-2 border-black bg-white shadow-[inset_-2px_-3px_0_#e2e2e2]">
        <div className="h-[2px] w-[18px] bg-black" />
      </div>
      <svg viewBox="3050 94 332 34" className="h-[34px] w-[332px]" shapeRendering="crispEdges">
        <rect x={3202} y={94} width={14} height={34} fill="#dbe2f0" />
        <rect x={3216} y={94} width={26} height={34} fill="#c6d3ef" />
        <rect x={3242} y={94} width={12} height={34} fill="#bccbf0" />
        <rect x={3254} y={94} width={116} height={34} fill="#b4c6f0" />
        {Array.from({ length: 24 }, (_, i) => (
          <rect key={i} x={Math.round(3065 + i * 13)} y={99} width={2} height={22} fill={i > 10 ? "#06103c" : "#000"} />
        ))}
        <rect x={3254} y={94} width={12} height={34} fill="#1a3fd8" />
        <rect x={3254} y={94} width={3} height={30} fill="#2452ff" />
      </svg>
      <div className="relative flex w-[34px] items-center justify-center border-2 border-black bg-white shadow-[inset_-2px_-3px_0_#e2e2e2]">
        <div className="h-[2px] w-[18px] bg-black" />
        <div className="absolute h-[18px] w-[2px] bg-black" />
      </div>
    </div>
  );
}

/* ------------------------------------------------------------------ */

export default function App() {
  return (
    <div className="flex h-[2234px] w-[3456px] flex-col overflow-hidden bg-[#efefef] font-['Liberation_Sans',Arial,sans-serif] text-black">
      <div className="h-[74px] shrink-0 bg-black" />

      <div className="flex h-[76px] shrink-0 items-start bg-[#eeeeee] text-[26px] leading-none">
        <div className="flex h-[76px] w-[1423px] items-start border-2 border-[#c0c0c0] font-['DejaVu_Sans',sans-serif] tracking-[-0.4px]">
          <Combo className="ml-[30px] w-[397px] pl-4">Human (GRCh38/hg38)</Combo>
          <Combo className="ml-[33px] w-[432px] pl-6">chr1</Combo>
          <div className="mt-[6px] ml-[28px] flex h-[60px] w-[448px] items-center border-2 border-[#7a8ba3] bg-white pl-[2px] shadow-[0_1px_1px_#c5ccd6]">
            <span className="whitespace-nowrap">chr1:204,977,757–204,994,449</span>
            <span className="h-8 w-[2px] shrink-0 bg-black" />
          </div>
          <span className="mt-[24px] ml-[11px] tracking-[-1.5px] text-[#333333]">Go</span>
        </div>
        <ToolbarIcons />
        <ZoomSlider />
      </div>

      <div className="h-1 shrink-0 bg-[#808080]" />

      <Panel height="h-[256px]" dark flat>
        <Ideogram />
      </Panel>

      <Panel
        height="h-[84px]"
        gap
        thumb="mt-[2px] h-[60px]"
        names={
          <>
            <Name className="h-[49px] pt-[3px] tracking-[0.45px]">annotated.expression.vcf.gz</Name>
            <Name className="h-[31px] border-t-2 border-[#c0c0c0] bg-[#f4f4f4] pt-[2px] tracking-[0.2px]">
              HCC1395_NORMAL_DNA
            </Name>
            <div className="flex-1 bg-white" />
          </>
        }
      >
        <svg viewBox="346 418 3076 82" className="block h-[82px] w-[3076px]" shapeRendering="crispEdges">
          <rect x={346} y={465} width={3076} height={2} fill="#c0c0c0" />
          <rect x={346} y={467} width={3076} height={29} fill="#f4f4f4" />
          <rect x={346} y={496} width={3076} height={4} fill="#fff" />
          <rect x={1878} y={422} width={6} height={34} fill="#0000e0" />
          <rect x={1878} y={456} width={6} height={9} fill="#ff0000" />
          <rect x={1878} y={468} width={6} height={26} fill="#ebebeb" />
          <rect x={1878} y={498} width={6} height={2} fill="#0000e0" />
        </svg>
      </Panel>

      <Panel
        height="h-[250px]"
        gap
        thumb="mt-[2px] h-[36px]"
        names={
          <>
            <Name className="h-[82px] tracking-[0.2px]">Normal DNA Coverage</Name>
            <Name className="h-[168px] tracking-[0.2px]">Normal DNA Reads</Name>
          </>
        }
      >
        <svg viewBox="346 512 3076 248" className="block h-[248px] w-[3076px]" shapeRendering="crispEdges">
          <RangeLabel y={530} length={53}>[0 - 184]</RangeLabel>
          <DnaCoverage data={NORMAL_COVERAGE} base={589} alleles={NORMAL_ALLELES} />
          {NORMAL_READS.map((r, i) => (
            <DnaRow key={i} row={r} y={598 + i * 28} />
          ))}
          <CenterLine y0={598} y1={754} />
        </svg>
      </Panel>

      <Panel
        height="h-[410px]"
        gap
        thumb="mt-[2px] h-[36px]"
        names={
          <>
            <Name className="h-[83px] tracking-[0.2px]">Tumor DNA Coverage</Name>
            <Name className="h-[327px] tracking-[0.2px]">Tumor DNA Reads</Name>
          </>
        }
      >
        <svg viewBox="346 772 3076 408" className="block h-[408px] w-[3076px]" shapeRendering="crispEdges">
          <RangeLabel y={790} length={53}>[0 - 253]</RangeLabel>
          <DnaCoverage data={TUMOR_COVERAGE} base={849} alleles={TUMOR_ALLELES} />
          {TUMOR_READS.map((r, i) => (
            <DnaRow key={i} row={r} y={858 + i * 28} />
          ))}
          <CenterLine y0={858} y1={1180} />
        </svg>
      </Panel>

      <Panel
        height="h-[600px]"
        gap
        thumb="mt-[2px] h-[522px]"
        names={
          <>
            <Name className="h-[82px] tracking-[0.2px]">Tumor RNA Coverage</Name>
            <Name className="h-[119px] tracking-[0.2px]">Tumor RNA Junctions</Name>
            <Name className="h-[399px] tracking-[0.2px]">Tumor RNA Reads</Name>
          </>
        }
      >
        <svg viewBox="346 1192 3076 598" className="block h-[598px] w-[3076px]">
          <RangeLabel y={1210} length={65}>[0 - 10.00]</RangeLabel>
          <rect x={346} y={1269} width={3076} height={2} fill="#f0f0f0" />
          <rect x={346} y={1389} width={3076} height={2} fill="#f0f0f0" />
          <RnaCoverage />
          <Junctions />
          {RNA_READS.map((r, i) => (
            <RnaRow key={i} row={r} y={1398 + i * 28} />
          ))}
          <CenterLine y0={1398} y1={1788} />
        </svg>
      </Panel>

      <Panel
        height="h-[392px]"
        flat
        thumb="mt-6 h-9"
        names={
          <div className="flex flex-1 flex-col justify-center pt-[2px] pl-[10px] tracking-[0.35px] whitespace-nowrap">
            <span>Ensembl105_GRCh38_UcscGene</span>
            <span>ustom_Coding.ensGene</span>
          </div>
        }
      >
        <Genes />
      </Panel>

      <div className="flex h-10 shrink-0 gap-[6px] bg-white text-[22px] leading-[37px] tracking-[-0.2px] whitespace-nowrap">
        <div className="w-[270px] border-2 border-black bg-[#efefef] pl-[1px]">10 tracks loaded</div>
        <div className="flex w-8 items-center justify-center border-2 border-black bg-[#efefef]">
          <div className="h-7 w-7 rounded-full bg-radial from-[#858585] from-40% to-[#a0a0a0]" />
        </div>
        <div className="w-[300px] border-2 border-black bg-[#efefef]">chr1:204,992,148</div>
        <div className="w-[2630px] border-2 border-black bg-[#efefef]">Logged in as: evieann10@gmail.com via Google</div>
        <div className="flex-1 border-2 border-black bg-[#efefef]">760M of 809M</div>
      </div>
    </div>
  );
}
